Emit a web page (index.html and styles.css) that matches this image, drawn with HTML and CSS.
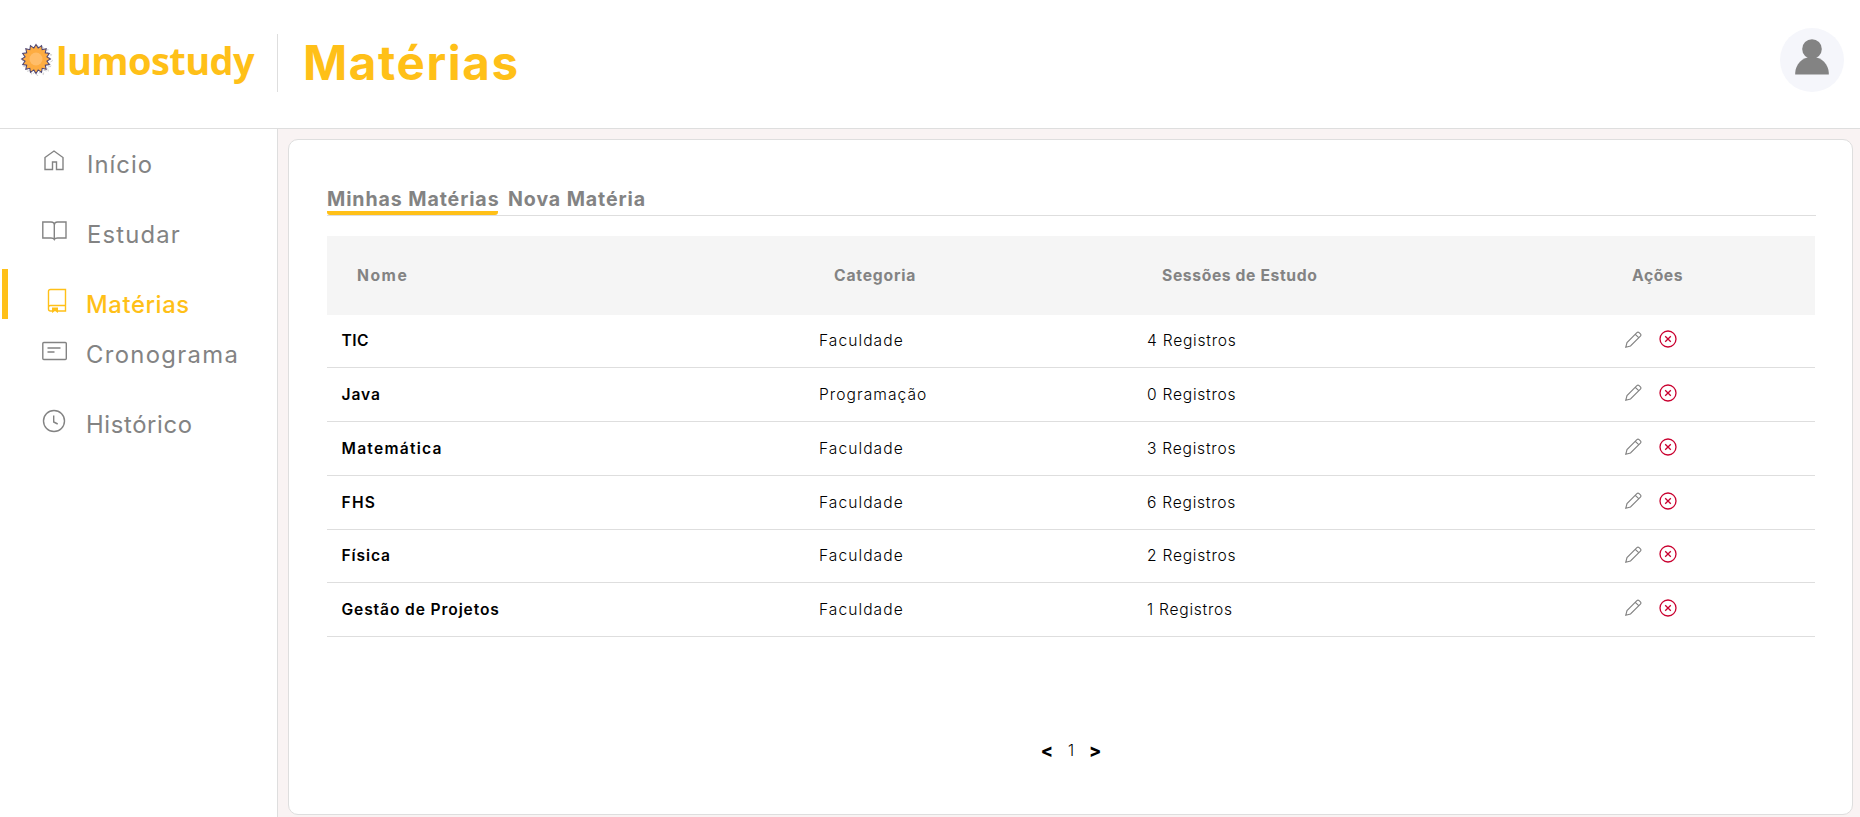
FILE: index.html
```html
<!DOCTYPE html>
<html lang="pt-BR">
<head>
<meta charset="utf-8">
<title>Lumostudy - Matérias</title>
<link rel="stylesheet" href="styles.css">
</head>
<body>
<svg class="sprite" aria-hidden="true">
  <symbol id="pencil" viewBox="0 0 17 17"><path d="M.8 16.200L2 11.500 11.900 1.600a1.600 1.600 0 0 1 2.200 0l1.300 1.300a1.600 1.600 0 0 1 0 2.200L5.500 15z M10.300 3.300l3.400 3.400"/></symbol>
  <symbol id="remove" viewBox="0 0 18 18"><circle cx="9" cy="9" r="8"/><path class="cross" d="M6.200 6.200l5.600 5.600M11.800 6.200l-5.600 5.600"/></symbol>
  <symbol id="star" viewBox="-16 -16 32 32" overflow="visible"><path d="M0-14L2.100-10.600 5.400-12.900 6-9 9.900-9.900 9-6 12.900-5.400 10.600-2.100 14 0 10.600 2.100 12.900 5.400 9 6 9.900 9.900 6 9 5.400 12.900 2.100 10.600 0 14-2.100 10.600-5.400 12.900-6 9-9.900 9.900-9 6-12.900 5.400-10.600 2.100-14 0-10.600-2.100-12.900-5.400-9-6-9.900-9.900-6-9-5.400-12.900-2.100-10.600z"/></symbol>
</svg>
<header class="header">
  <div class="brand">
    <svg class="sun" viewBox="-16 -16 32 32"><use class="sun-halo" href="#star" x="-16" y="-16" width="35" height="35"/><use class="sun-rays" href="#star" x="-16.500" y="-16.500" width="33" height="33"/><circle class="sun-core" cx="0" cy="0" r="6.500"/></svg>
    <span class="brand-name">lumostudy</span>
  </div>
  <h1 class="title">Matérias</h1>
  <div class="avatar"><svg viewBox="0 0 64 64"><circle cx="32" cy="21" r="9.800"/><path d="M15.200 46.500V45C15.500 36.500 22 29 32 29s16.500 7.500 16.800 16v1.500z"/></svg></div>
</header>
<div class="body">
  <nav class="nav">
    <a class="nav-item"><svg class="ico" viewBox="0 0 28 28"><path d="M5 10.500L14 4l9 6.500V22.500H16.500V15H12.500V22.500H5z"/></svg><span class="w-inicio">Início</span></a>
    <a class="nav-item"><svg class="ico" viewBox="0 0 28 28"><path d="M2.800 5H11Q14.300 5 14.300 8Q14.300 5 17.500 5H26V21H17.500Q15 21 14.300 22.500Q13.500 21 11 21H2.800zM14.300 8v14.500"/></svg><span class="w-estudar">Estudar</span></a>
    <a class="nav-item active"><svg class="ico" viewBox="0 0 28 28"><path d="M12 24H10.500Q8.500 24 8.500 22V4.500Q8.500 2.500 10.500 2.500H25.500V24H18M8.500 20.500Q8.500 18.500 10.500 18.500H25.500"/><path class="solid" d="M12 20.500h6v5.500l-3-2-3 2z"/></svg><span class="w-materias">Matérias</span></a>
    <a class="nav-item"><svg class="ico" viewBox="0 0 28 28"><rect x="2.800" y="5.500" width="23.500" height="17" rx="1"/><path d="M7.500 11H20.500M7.500 15H14.500"/></svg><span class="w-crono">Cronograma</span></a>
    <a class="nav-item"><svg class="ico" viewBox="0 0 28 28"><circle cx="14" cy="14" r="10.500"/><path d="M13.700 8.500V15l4 2"/></svg><span class="w-hist">Histórico</span></a>
  </nav>
  <main class="main">
    <section class="card">
      <div class="tabs"><a class="tab selected">Minhas Matérias</a><a class="tab">Nova Matéria</a></div>
      <table class="table">
        <colgroup><col class="c1"><col class="c2"><col class="c3"><col class="c4"></colgroup>
        <thead><tr><th class="h-nome">Nome</th><th>Categoria</th><th class="h-sessoes">Sessões de Estudo</th><th class="h-acoes">Ações</th></tr></thead>
        <tbody>
          <tr><td class="name short">TIC</td><td>Faculdade</td><td class="count">4 Registros</td><td class="actions"><svg class="edit"><use href="#pencil"/></svg><svg class="del"><use href="#remove"/></svg></td></tr>
          <tr><td class="name">Java</td><td>Programação</td><td class="count">0 Registros</td><td class="actions"><svg class="edit"><use href="#pencil"/></svg><svg class="del"><use href="#remove"/></svg></td></tr>
          <tr><td class="name wide">Matemática</td><td>Faculdade</td><td class="count">3 Registros</td><td class="actions"><svg class="edit"><use href="#pencil"/></svg><svg class="del"><use href="#remove"/></svg></td></tr>
          <tr><td class="name wide">FHS</td><td>Faculdade</td><td class="count">6 Registros</td><td class="actions"><svg class="edit"><use href="#pencil"/></svg><svg class="del"><use href="#remove"/></svg></td></tr>
          <tr><td class="name">Física</td><td>Faculdade</td><td class="count">2 Registros</td><td class="actions"><svg class="edit"><use href="#pencil"/></svg><svg class="del"><use href="#remove"/></svg></td></tr>
          <tr><td class="name">Gestão de Projetos</td><td>Faculdade</td><td class="count">1 Registros</td><td class="actions"><svg class="edit"><use href="#pencil"/></svg><svg class="del"><use href="#remove"/></svg></td></tr>
        </tbody>
      </table>
      <div class="pager"><b>&lt;</b><span>1</span><b>&gt;</b></div>
    </section>
  </main>
</div>
</body>
</html>
```
FILE: styles.css
```css
* { box-sizing: border-box; }
body { margin: 0; height: 817px; overflow: hidden; background: #fff; font-family: Inter, "Noto Sans", sans-serif; color: #000; }
.sprite { position: absolute; width: 0; height: 0; }
.header { height: 129px; border-bottom: 1px solid #dedede; display: flex; align-items: flex-start; }
.brand { width: 278px; height: 58px; margin-top: 34px; border-right: 1px solid #dedede; display: flex; align-items: flex-start; padding-left: 20px; }
.sun { width: 32px; height: 32px; margin-top: 9px; overflow: visible; }
.sun-halo { fill: #fff; stroke: #ccc; stroke-width: .8; stroke-dasharray: 3 1.500; }
.sun-rays { fill: #fdac41; stroke: #4c4372; stroke-width: 1; }
.sun-core { fill: #ffbd69; }
.brand-name { font: 700 38px/53px "Open Sans", sans-serif; letter-spacing: -.6px; color: #ffc018; margin-left: 4px; }
.title { margin: 33px 0 0 25px; font-size: 47.500px; line-height: 60px; font-weight: 700; letter-spacing: 1.600px; color: #ffc018; }
.avatar { width: 64px; height: 64px; margin: 28px 16px 0 auto; border-radius: 50%; background: #f5f6fb; }
.avatar svg { display: block; fill: #838383; }
.body { display: flex; height: 688px; }
.nav { width: 278px; border-right: 1px solid #dedede; padding-left: 2px; }
.nav-item { display: flex; height: 70px; color: #838383; padding-left: 38px; }
.nav-item span { font-size: 23.800px; line-height: 71px; margin-left: 19px; }
.nav-item .w-inicio { letter-spacing: 1.050px; }
.nav-item .w-estudar { letter-spacing: 1.200px; }
.nav-item .w-materias { letter-spacing: .6px; margin-left: 18px; }
.nav-item .w-crono { letter-spacing: 1.350px; margin-left: 18px; }
.nav-item .w-hist { letter-spacing: .65px; margin-left: 18px; }
.ico { width: 28px; height: 28px; margin-top: 18px; fill: none; stroke: currentColor; stroke-width: 1.400; }
.ico .solid { fill: currentColor; stroke: none; }
.active { height: 50px; border-left: 6px solid #ffc018; padding-left: 32px; color: #ffc018; }
.active span { font-weight: 500; }
.main { flex: 1; background: #f9f3f3; padding: 10px 7px 2px 10px; }
.card { height: 676px; border: 1px solid #dedede; border-radius: 10px; background: #fff; padding: 47px 36px 0 38px; }
.tabs { display: flex; gap: 10px; height: 29px; border-bottom: 1px solid #dedede; }
.tab { height: 28px; font-size: 19.600px; font-weight: 700; line-height: 24px; letter-spacing: .9px; color: #838383; white-space: nowrap; }
.selected { width: 171px; border-bottom: 4px solid #ffc018; border-radius: 0 0 3px 3px; }
.table { width: 1488px; margin-top: 20px; border-collapse: separate; border-spacing: 0; table-layout: fixed; }
.c1 { width: 477px; }
.c2 { width: 328px; }
.c3 { width: 470px; }
.c4 { width: 213px; }
th { height: 79px; background: #f5f5f5; text-align: left; padding: 0 0 0 30px; font-size: 15.700px; font-weight: 700; letter-spacing: .8px; color: #838383; }
.h-nome { letter-spacing: 1.500px; }
.h-sessoes { letter-spacing: .62px; }
.h-acoes { letter-spacing: .55px; }
td { height: 54px; padding: 0 0 0 15px; font-size: 15.600px; font-weight: 300; letter-spacing: 1.050px; border-bottom: 1px solid #dedede; }
tr:nth-child(4n+1) td { height: 53px; padding-bottom: 1px; }
.name { padding-left: 14.500px; font-weight: 600; letter-spacing: .88px; }
.short { letter-spacing: .5px; }
.wide { letter-spacing: 1.250px; }
.count { letter-spacing: .75px; }
td.actions, tr:nth-child(4n+1) td.actions { padding: 0 0 4px 23px; font-size: 0; letter-spacing: 0; }
.actions svg { fill: none; vertical-align: middle; }
.edit { width: 17px; height: 17px; margin-right: 17px; stroke: #838383; stroke-width: 1.150; }
.del { width: 18px; height: 18px; stroke: #c9002f; stroke-width: 1.300; }
.pager { display: flex; justify-content: center; align-items: center; gap: 15px; margin-top: 103px; padding-right: 1px; height: 20px; font-size: 15.400px; font-weight: 300; }
.pager b { font-size: 18px; font-weight: 800; }
```
